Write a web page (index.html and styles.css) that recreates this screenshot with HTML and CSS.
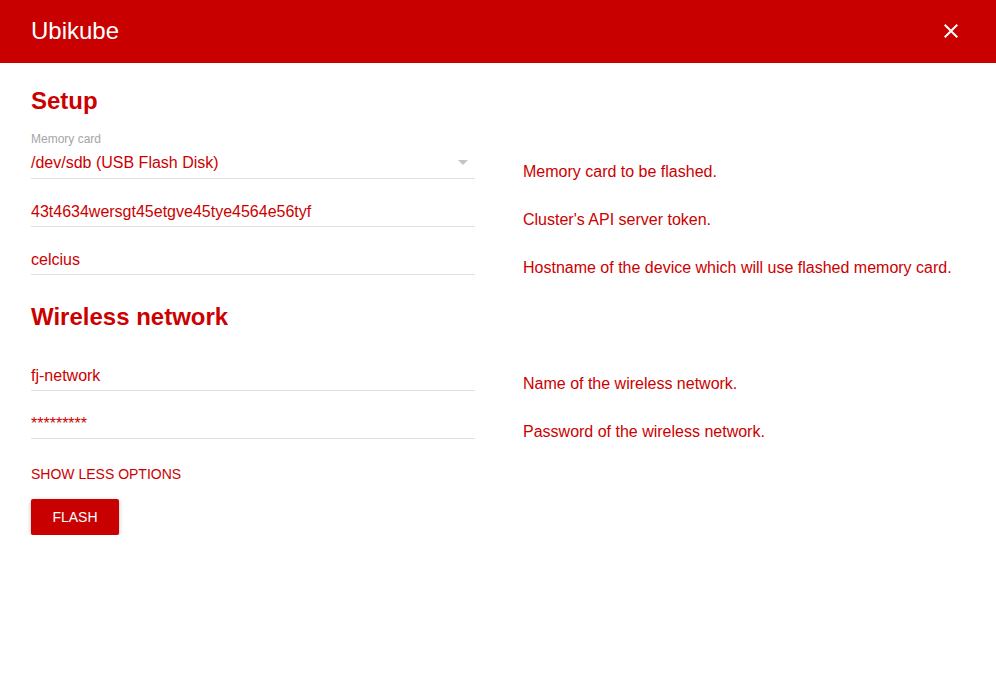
FILE: index.html
```html
<!DOCTYPE html>
<html>
<head>
<meta charset="utf-8">
<link rel="stylesheet" href="styles.css">
</head>
<body>
<header class="appbar">
  <h1 class="appbar-title">Ubikube</h1>
  <button class="close-btn" aria-label="Close">
    <svg viewBox="0 0 24 24" width="24" height="24"><path fill="#fff" d="M19 6.41L17.59 5 12 10.59 6.41 5 5 6.41 10.59 12 5 17.59 6.41 19 12 13.41 17.59 19 19 17.59 13.41 12z"/></svg>
  </button>
</header>
<main class="content">
  <h2 class="section-title">Setup</h2>
  <div class="form-grid">
    <div class="field field-labelled">
      <div class="field-label">Memory card</div>
      <div class="field-input select">
        <span>/dev/sdb (USB Flash Disk)</span>
        <svg class="drop-icon" viewBox="0 0 24 24" width="24" height="24"><path d="M7 10l5 5 5-5z"/></svg>
      </div>
    </div>
    <div class="desc">Memory card to be flashed.</div>

    <div class="field">
      <div class="field-input">43t4634wersgt45etgve45tye4564e56tyf</div>
    </div>
    <div class="desc">Cluster's API server token.</div>

    <div class="field">
      <div class="field-input">celcius</div>
    </div>
    <div class="desc">Hostname of the device which will use flashed memory card.</div>
  </div>

  <h2 class="section-title second">Wireless network</h2>
  <div class="form-grid wireless">
    <div class="field">
      <div class="field-input">fj-network</div>
    </div>
    <div class="desc">Name of the wireless network.</div>

    <div class="field">
      <div class="field-input">*********</div>
    </div>
    <div class="desc">Password of the wireless network.</div>
  </div>

  <div class="options-link">SHOW LESS OPTIONS</div>
  <button class="flash-btn">FLASH</button>
</main>
</body>
</html>
```

FILE: styles.css
```css
* { box-sizing: border-box; }
html, body { margin: 0; padding: 0; background: #fff; }
body {
  font-family: "Liberation Sans", Arial, sans-serif;
  color: #cc0000;
}
.appbar {
  height: 63px;
  background: #c80000;
  display: flex;
  align-items: center;
  justify-content: space-between;
  padding: 0 33px 1px 31px;
}
.appbar-title {
  margin: 0;
  font-size: 24px;
  font-weight: 400;
  line-height: 28px;
  color: #fff;
}
.close-btn {
  border: 0;
  background: none;
  padding: 0;
  width: 24px;
  height: 24px;
  display: block;
  cursor: pointer;
}
.close-btn svg { display: block; }
.content {
  padding: 24px 31px 0 31px;
}
.section-title {
  margin: 0;
  font-size: 24px;
  line-height: 28px;
  font-weight: 700;
  color: #cc0000;
}
.section-title.second { margin-top: 28px; }
.form-grid {
  display: grid;
  grid-template-columns: 444px 1fr;
  column-gap: 48px;
}
.form-grid.wireless { margin-top: 12px; }
.field {
  padding-top: 23px;
  border-bottom: 1px solid #e0e0e0;
}
.field-labelled { padding-top: 17px; }
.field-label {
  font-size: 12px;
  line-height: 14px;
  color: #a6a6a6;
  margin-bottom: 7px;
}
.field-input {
  font-size: 16px;
  line-height: 19px;
  padding-bottom: 5px;
  color: #cc0000;
}
.field-labelled .field-input { padding-bottom: 6px; }
.select {
  display: flex;
  justify-content: space-between;
  align-items: center;
}
.drop-icon {
  display: block;
  fill: #c4c4c4;
  margin: -3px 0 -2px 0;
}
.desc {
  align-self: end;
  font-size: 16px;
  line-height: 19px;
  margin-bottom: -2px;
  color: #cc0000;
}
.options-link {
  margin-top: 27px;
  font-size: 14px;
  line-height: 16px;
  color: #cc0000;
}
.flash-btn {
  margin-top: 17px;
  width: 88px;
  height: 36px;
  border: 0;
  border-radius: 2px;
  background: #c80000;
  color: #fff;
  font-family: "Liberation Sans", Arial, sans-serif;
  font-size: 14px;
  box-shadow: 0 1px 5px rgba(0,0,0,0.2), 0 2px 2px rgba(0,0,0,0.14), 0 3px 1px -2px rgba(0,0,0,0.12);
  display: block;
  padding: 0;
}
```
